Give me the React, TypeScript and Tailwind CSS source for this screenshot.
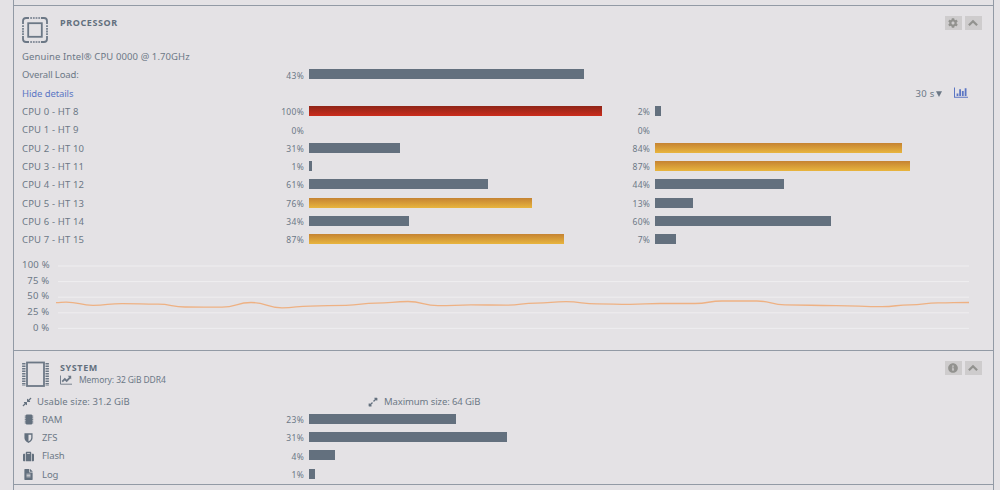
import type { ReactNode } from 'react';
import clsx from 'clsx';
import {
  FaCog,
  FaInfoCircle,
  FaCompressAlt,
  FaExpandAlt,
  FaSuitcase,
  FaFileAlt,
  FaShieldAlt,
} from 'react-icons/fa';

interface CpuRow {
  name: string;
  load: number;
  htLoad: number;
}

const CPUS: CpuRow[] = [
  { name: 'CPU 0 - HT 8', load: 100, htLoad: 2 },
  { name: 'CPU 1 - HT 9', load: 0, htLoad: 0 },
  { name: 'CPU 2 - HT 10', load: 31, htLoad: 84 },
  { name: 'CPU 3 - HT 11', load: 1, htLoad: 87 },
  { name: 'CPU 4 - HT 12', load: 61, htLoad: 44 },
  { name: 'CPU 5 - HT 13', load: 76, htLoad: 13 },
  { name: 'CPU 6 - HT 14', load: 34, htLoad: 60 },
  { name: 'CPU 7 - HT 15', load: 87, htLoad: 7 },
];

// x, y inside the chart drawing
const HISTORY: [number, number][] = [
  [0, 42.7], [10, 42.1], [37, 45.3], [66, 43.6], [102, 44.1], [129, 47], [166, 47.2], [195, 42.5],
  [226, 47.8], [254, 46.1], [290, 45.3], [320, 43.1], [352, 41.5], [382, 45.7], [415, 44.9], [450, 45.1],
  [480, 43.1], [510, 41.7], [541, 43.9], [574, 44.4], [604, 43.5], [639, 43.5], [666, 41], [701, 41],
  [729, 44.8], [780, 45.7], [826, 46.7], [854, 44.8], [882, 42.9], [913, 42.5],
];

function smoothPath(points: [number, number][]) {
  return points.reduce((path, [x, y], i) => {
    if (i === 0) return `M${x} ${y}`;
    const [px, py] = points[i - 1];
    const mid = (px + x) / 2;
    return `${path} C${mid} ${py} ${mid} ${y} ${x} ${y}`;
  }, '');
}

function Meter({ value, scale = 293.4 }: { value: number; scale?: number }) {
  return (
    <div className="flex h-full items-center">
      <span className="w-[32.5px] shrink-0 pt-[1px] text-right text-[8.5px] leading-none tracking-[0.3px]">{value}%</span>
      <div
        className={clsx(
          'mb-[2px] ml-[5px] h-[10px]',
          value >= 95 && 'bg-linear-to-b from-[#8f2517] to-[#cb2c1c]',
          value >= 75 && value < 95 && 'bg-linear-to-b from-[#c58332] to-[#e8b53e]',
          value < 75 && 'bg-[#63707e]'
        )}
        style={{ width: (value / 100) * scale }}
      />
    </div>
  );
}

function Row({ label, children }: { label: ReactNode; children?: ReactNode }) {
  return (
    <div className="flex h-[18.3px] items-center">
      <div className="w-[249.5px] shrink-0 whitespace-nowrap">{label}</div>
      {children}
    </div>
  );
}

function HeaderButtons({ children }: { children: ReactNode }) {
  return (
    <div className="ml-auto flex gap-[3px] text-[#92928f]">
      <button className="flex h-[14px] w-[17px] items-center justify-center bg-[#cecccd]">{children}</button>
      <button className="flex h-[14px] w-[17px] items-center justify-center bg-[#cecccd]">
        <svg viewBox="0 0 10 8" className="h-[8px] w-[10px]" fill="none" stroke="currentColor" strokeWidth="2.2">
          <path d="M0.9 6.3 5 2.2l4.1 4.1" />
        </svg>
      </button>
    </div>
  );
}

function CpuIcon() {
  return (
    <svg viewBox="0 0 26 26" className="mt-[0.5px] size-[26px]" fill="none" stroke="currentColor">
      <path d="M1 7V4Q1 1 4 1H7M19 1h3q3 0 3 3v3M25 19v3q0 3-3 3h-3M7 25H4q-3 0-3-3v-3" strokeWidth="1.8" />
      <path d="M8.2 1h10M8.2 25h10M1 8.2v10M25 8.2v10" strokeWidth="1.7" strokeDasharray="1.8 0.9" />
      <rect x="6.2" y="6.2" width="13.6" height="13.6" strokeWidth="1.8" />
    </svg>
  );
}

function MemoryIcon() {
  return (
    <svg viewBox="0 0 27 26" className="-ml-[0.5px] h-[26px] w-[27px]" fill="none" stroke="currentColor">
      <rect x="5" y="1.5" width="17" height="23.5" strokeWidth="1.8" />
      <path d="M1.8 2v23M25.2 2v23" strokeWidth="3.4" strokeDasharray="1.6 0.9" />
    </svg>
  );
}

function RamIcon() {
  return (
    <svg viewBox="0 0 10 11" className="h-[11px] w-[10px]" fill="currentColor">
      <rect x="1.8" y="0.5" width="6.4" height="10" rx="1" />
      <path d="M1.3 1.5v8M8.7 1.5v8" stroke="currentColor" strokeWidth="1" strokeDasharray="1.2 0.5" />
    </svg>
  );
}

// heater shield, left half filled and right half hollow
function ShieldIcon() {
  return (
    <svg viewBox="0 0 9 10" className="h-[10px] w-[9px]">
      <path d="M1.1 1h6.8v4Q7.9 7.4 4.5 9.2 1.1 7.4 1.1 5z" fill="none" stroke="currentColor" strokeWidth="1.3" />
      <path d="M1 1h3.5v8.2Q1 7.4 1 5z" fill="currentColor" />
    </svg>
  );
}

function BarChartIcon() {
  return (
    <svg viewBox="0 0 14 11" className="h-[11px] w-[14px] text-[#5b76c4]" fill="currentColor">
      <path d="M0 0.5h1v9.3h13v1H0z" />
      <path d="M2.6 6.5h1.8v2.6H2.6zM5.2 2.3H7v6.8H5.2zM7.9 4h1.8v5.1H7.9zM10.7 1.3h1.8v7.8h-1.8z" />
    </svg>
  );
}

function LineChartIcon() {
  return (
    <svg viewBox="0 0 12 10" className="h-[10px] w-[12px]" fill="none" stroke="currentColor">
      <path d="M0.5 0.5v8.7h11.5" strokeWidth="0.9" />
      <path d="M2.2 6.6 4.8 4l1.9 1.9 3.4-3.6" strokeWidth="1.8" />
      <path d="M7.7 0.7h3.5v3.5z" fill="currentColor" stroke="none" />
    </svg>
  );
}

function MemoryLabel({ icon, name }: { icon: ReactNode; name: string }) {
  return (
    <div className="flex items-center">
      <span className="flex w-[13px] justify-center text-[#63707e]">{icon}</span>
      <span className="ml-[7px]">{name}</span>
    </div>
  );
}

function LoadChart() {
  return (
    <div className="mt-[11px] flex h-[80px]">
      <div className="-mt-[3px] flex h-[78px] w-[27.5px] flex-col text-right text-[9.5px] leading-[15.6px] tracking-[0.25px] whitespace-nowrap">
        {[100, 75, 50, 25, 0].map((tick) => (
          <span key={tick}>{tick} %</span>
        ))}
      </div>
      <svg viewBox="0 0 914 80" className="ml-[6.5px] h-[80px] w-[914px]" fill="none">
        <path d="M2 6h911M2 21.6h911M2 37.2h911M2 52.8h911M2 68.4h911" stroke="#efeef0" />
        <path d={smoothPath(HISTORY)} stroke="#eeb183" strokeWidth="1.3" />
      </svg>
    </div>
  );
}

export default function App() {
  return (
    <div className="h-[490px] w-[1000px] overflow-hidden bg-[#e4e2e5] font-['Noto_Sans',sans-serif] text-[9.5px] leading-[18px] tracking-[-0.1px] text-[#6c7886]">
      <div className="ml-[12.5px] h-full w-[981px] border-x border-[#929aa5]">
        <div className="h-[6px] border-b border-[#929aa5]" />

        <section className="h-[345px] border-b border-[#929aa5] pt-[10px] pr-[11px] pl-[8.5px]">
          <div className="flex h-[32px]">
            <CpuIcon />
            <h2 className="ml-[12px] text-[9px] leading-[14px] font-bold tracking-[0.6px] text-[#63707e]">PROCESSOR</h2>
            <HeaderButtons>
              <FaCog className="size-[10px]" />
            </HeaderButtons>
          </div>
          <Row label={<span className="tracking-[0.1px]">Genuine Intel® CPU 0000 @ 1.70GHz</span>} />
          <Row label={<span className="tracking-[-0.15px]">Overall Load:</span>}>
            <Meter value={43} scale={640} />
          </Row>
          <Row label={<a className="text-[#5b76c4]">Hide details</a>}>
            <div className="ml-auto flex items-center pr-[14px]">
              <span className="tracking-[0.3px]">30 s</span>
              <svg viewBox="0 0 6 6" className="ml-px size-[6px]" fill="currentColor">
                <path d="M0 0.3h6L3 6z" />
              </svg>
              <span className="mb-[2px] ml-[12px]">
                <BarChartIcon />
              </span>
            </div>
          </Row>
          {CPUS.map((cpu) => (
            <Row key={cpu.name} label={<span className="tracking-[0.15px]">{cpu.name}</span>}>
              <div className="h-full w-[346.2px]">
                <Meter value={cpu.load} />
              </div>
              <Meter value={cpu.htLoad} />
            </Row>
          ))}
          <LoadChart />
        </section>

        <section className="h-[134px] border-b border-[#929aa5] pt-[10px] pr-[11px] pl-[8.5px]">
          <div className="flex h-[31.4px]">
            <MemoryIcon />
            <div className="ml-[11.5px]">
              <h2 className="text-[9px] leading-[14px] font-bold tracking-[0.6px] text-[#63707e]">SYSTEM</h2>
              <div className="-mt-px flex items-center text-[8.5px] leading-[11px]">
                <LineChartIcon />
                <span className="ml-[7px]">Memory: 32 GiB DDR4</span>
              </div>
            </div>
            <HeaderButtons>
              <FaInfoCircle className="size-[10px]" />
            </HeaderButtons>
          </div>
          <div className="flex h-[18.3px] items-center">
            <div className="flex w-[346px] items-center">
              <FaCompressAlt className="size-[10px] text-[#63707e]" />
              <span className="ml-[5px] tracking-[0.05px]">Usable size: 31.2 GiB</span>
            </div>
            <FaExpandAlt className="size-[10px] text-[#63707e]" />
            <span className="ml-[6px]">Maximum size: 64 GiB</span>
          </div>
          <Row label={<MemoryLabel icon={<RamIcon />} name="RAM" />}>
            <Meter value={23} scale={640} />
          </Row>
          <Row label={<MemoryLabel icon={<ShieldIcon />} name="ZFS" />}>
            <Meter value={31} scale={640} />
          </Row>
          <Row label={<MemoryLabel icon={<FaSuitcase className="size-[11px]" />} name="Flash" />}>
            <Meter value={4} scale={640} />
          </Row>
          <Row label={<MemoryLabel icon={<FaFileAlt className="size-[11px]" />} name="Log" />}>
            <Meter value={1} scale={640} />
          </Row>
        </section>
      </div>
    </div>
  );
}
